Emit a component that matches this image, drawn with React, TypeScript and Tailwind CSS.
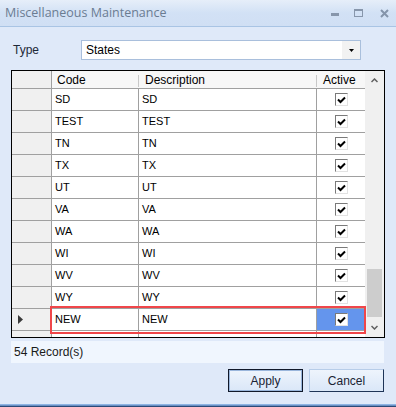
import React from 'react';

const rows = ['SD', 'TEST', 'TN', 'TX', 'UT', 'VA', 'WA', 'WI', 'WV', 'WY', 'NEW', ''];

function CheckBox() {
  return (
    <div className="w-[13px] h-[13px] bg-white border border-t-[#7a7a7a] border-l-[#7a7a7a] border-r-[#e2e2e2] border-b-[#e2e2e2] flex items-center justify-center">
      <svg width="9" height="8" viewBox="0 0 9 8">
        <path d="M1 3.5 L3.5 6 L8 1.5" fill="none" stroke="#000" strokeWidth="2" />
      </svg>
    </div>
  );
}

export default function App() {
  return (
    <div className="w-[396px] h-[407px] bg-[#dfe9f9] flex flex-col overflow-hidden" style={{ fontFamily: '"Liberation Sans", Arial, sans-serif' }}>
      {/* title bar */}
      <div className="h-[27px] shrink-0 bg-gradient-to-b from-[#e6eef9] via-[#d2e1f5] to-[#d0dff4] border-b border-[#a9c4e4] flex items-center justify-between pl-[5px] pr-[7px]">
        <span className="text-[12.5px] text-[#6b7c92] pt-[1px]" style={{ fontFamily: '"Open Sans", "Noto Sans", sans-serif' }}>
          Miscellaneous Maintenance
        </span>
        <div className="flex items-center">
          <svg width="8" height="4" viewBox="0 0 8 4" className="mr-[15px] mt-[4px]">
            <rect x="0" y="0" width="8" height="3" fill="#8796ab" />
          </svg>
          <svg width="9" height="8" viewBox="0 0 9 8" className="mr-[17px]">
            <rect x="0.5" y="0.5" width="8" height="7" fill="none" stroke="#8796ab" />
            <rect x="0" y="0" width="9" height="2" fill="#8796ab" />
          </svg>
          <svg width="9" height="9" viewBox="0 0 9 9">
            <path d="M1 1 L8 8 M8 1 L1 8" stroke="#8494aa" strokeWidth="2" />
          </svg>
        </div>
      </div>

      <div className="flex-1 flex flex-col px-[11px]">
        {/* type row */}
        <div className="mt-[13px] h-[20px] flex items-center">
          <span className="w-[70px] pl-[2px] text-[12px] text-[#1d2838]">Type</span>
          <div className="w-[280px] h-[20px] bg-white border border-[#a9bfdc] flex items-center">
            <span className="flex-1 pl-[4px] text-[12px] text-black">States</span>
            <div className="w-[18px] h-full bg-[#f2f2f2] flex items-center justify-center">
              <svg width="5" height="3" viewBox="0 0 5 3">
                <path d="M0 0 H5 L2.5 3 Z" fill="#000" />
              </svg>
            </div>
          </div>
        </div>

        {/* grid */}
        <div className="mt-[10px] h-[268px] border border-black bg-white flex relative">
          <div className="w-[353px] flex flex-col overflow-hidden">
            {/* header */}
            <div className="h-[18px] shrink-0 flex border-b border-[#a0a0a0] bg-[#f7f7f7] text-[12px] text-black">
              <div className="w-[40px] shrink-0 bg-[#f0f0f0] border-r border-[#a0a0a0]" />
              <div className="w-[87px] shrink-0 pl-[5px] flex items-center border-r border-[#f7f7f7] relative">
                Code
                <span className="absolute right-[-1px] top-[4px] h-[12px] w-px bg-[#c8c8c8]" />
              </div>
              <div className="w-[178px] shrink-0 pl-[6px] flex items-center relative">
                Description
                <span className="absolute right-0 top-[4px] h-[12px] w-px bg-[#c8c8c8]" />
              </div>
              <div className="flex-1 pl-[6px] flex items-center">Active</div>
            </div>
            {rows.map((r, i) => {
              const sel = r === 'NEW';
              return (
                <div key={i} className="h-[22px] shrink-0 flex border-b border-[#a0a0a0] text-[11px] text-black">
                  <div className="w-[40px] shrink-0 bg-[#f0f0f0] border-r border-[#a0a0a0] flex items-center pl-[6px]">
                    {sel && (
                      <svg width="5" height="9" viewBox="0 0 5 9">
                        <path d="M0 0 L5 4.5 L0 9 Z" fill="#3a3a3a" />
                      </svg>
                    )}
                  </div>
                  <div className="w-[87px] shrink-0 border-r border-[#a0a0a0] pl-[3px] flex items-center">{r}</div>
                  <div className="w-[178px] shrink-0 border-r border-[#a0a0a0] pl-[3px] flex items-center">{r}</div>
                  <div className={`flex-1 flex items-center justify-center ${sel ? 'bg-[#6495ed]' : ''}`}>
                    {r && <CheckBox />}
                  </div>
                </div>
              );
            })}
          </div>

          {/* scrollbar */}
          <div className="flex-1 bg-[#f0f0f0] flex flex-col items-center">
            <div className="h-[18px] flex items-center justify-center">
              <svg width="7" height="5" viewBox="0 0 7 5">
                <path d="M0.5 4 L3.5 1 L6.5 4" fill="none" stroke="#606060" strokeWidth="1.5" />
              </svg>
            </div>
            <div className="flex-1 w-full flex flex-col justify-end pb-[1px]">
              <div className="h-[48px] mx-[2px] bg-[#cdcdcd]" />
            </div>
            <div className="h-[19px] flex items-center justify-center">
              <svg width="7" height="5" viewBox="0 0 7 5">
                <path d="M0.5 1 L3.5 4 L6.5 1" fill="none" stroke="#606060" strokeWidth="1.5" />
              </svg>
            </div>
          </div>

          {/* highlight */}
          <div className="absolute left-[38px] top-[235px] w-[316px] h-[28px] border-2 border-[#f0464a] pointer-events-none" />
        </div>

        {/* status */}
        <div className="mt-[3px] h-[22px] w-[373px] bg-[#f0f6fe] flex items-center pl-[3px] text-[12px] text-[#1a1a1a]">
          54 Record(s)
        </div>

        {/* buttons */}
        <div className="mt-[6px] flex justify-end gap-[6px] pr-[1px] text-[12px] text-[#1a2333]">
          <button className="w-[75px] h-[23px] bg-gradient-to-b from-[#eef4fc] to-[#dae7f8] border border-[#10182a] shadow-[inset_0_0_0_1px_#9ab6dc]">
            Apply
          </button>
          <button className="w-[75px] h-[23px] bg-gradient-to-b from-[#eef4fc] to-[#dae7f8] border border-[#b7cde9] border-r-[#1e3457] border-b-[#1e3457]">
            Cancel
          </button>
        </div>
      </div>

      {/* bottom edge */}
      <div className="h-[3px] shrink-0 border-t border-[#8eb4e3] bg-[#6a8fc2] border-b border-b-[#2b4a78]" />
    </div>
  );
}
